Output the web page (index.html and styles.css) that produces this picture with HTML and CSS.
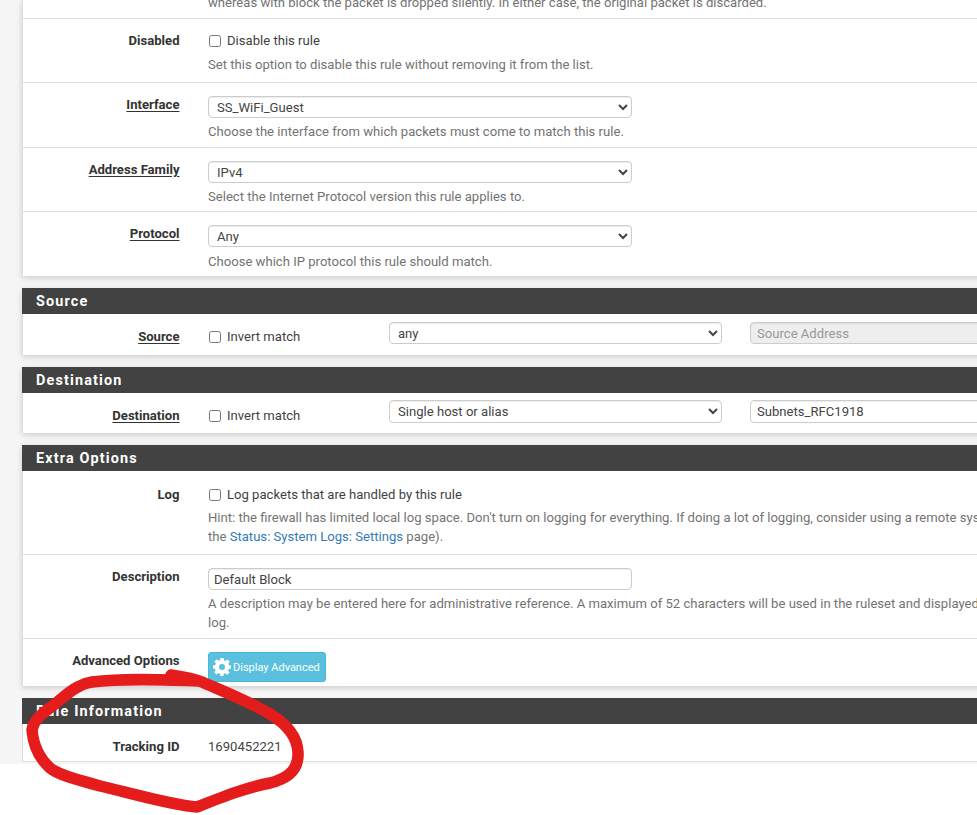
FILE: index.html
```html
<!DOCTYPE html>
<html lang="en">
<head>
<meta charset="utf-8">
<title>Firewall rule</title>
<link rel="stylesheet" href="styles.css">
</head>
<body>
<div class="page">
  <section class="panel first">
    <div class="row clip-row"><div class="label"></div><div class="field"><p class="hint clip-text">whereas with block the packet is dropped silently. In either case, the original packet is discarded.</p></div></div>
    <div class="row r-disabled"><div class="label">Disabled</div><div class="field"><label class="check"><input type="checkbox"> Disable this rule</label><p class="hint">Set this option to disable this rule without removing it from the list.</p></div></div>
    <div class="row r-select tall"><div class="label"><u>Interface</u></div><div class="field"><select class="wide"><option>SS_WiFi_Guest</option></select><p class="hint">Choose the interface from which packets must come to match this rule.</p></div></div>
    <div class="row r-select"><div class="label"><u>Address Family</u></div><div class="field"><select class="wide"><option>IPv4</option></select><p class="hint">Select the Internet Protocol version this rule applies to.</p></div></div>
    <div class="row r-select last"><div class="label"><u>Protocol</u></div><div class="field"><select class="wide"><option>Any</option></select><p class="hint">Choose which IP protocol this rule should match.</p></div></div>
  </section>
  <section class="panel">
    <h2>Source</h2>
    <div class="row r-addr r-src last"><div class="label"><u>Source</u></div><div class="field addr"><label class="check inv"><input type="checkbox"> Invert match</label><select class="mid"><option>any</option></select><input class="text addr-input" type="text" placeholder="Source Address" disabled></div></div>
  </section>
  <section class="panel">
    <h2>Destination</h2>
    <div class="row r-addr r-dest last"><div class="label"><u>Destination</u></div><div class="field addr"><label class="check inv"><input type="checkbox"> Invert match</label><select class="mid"><option>Single host or alias</option></select><input class="text addr-input" type="text" value="Subnets_RFC1918"></div></div>
  </section>
  <section class="panel">
    <h2>Extra Options</h2>
    <div class="row r-log"><div class="label">Log</div><div class="field"><label class="check"><input type="checkbox"> Log packets that are handled by this rule</label><p class="hint tight">Hint: the firewall has limited local log space. Don't turn on logging for everything. If doing a lot of logging, consider using a remote syslog server (see<br>the <a href="#">Status: System Logs: Settings</a> page).</p></div></div>
    <div class="row r-desc"><div class="label">Description</div><div class="field"><input class="text wide" type="text" value="Default Block"><p class="hint">A description may be entered here for administrative reference. A maximum of 52 characters will be used in the ruleset and displayed in the firewall<br>log.</p></div></div>
    <div class="row r-adv last"><div class="label">Advanced Options</div><div class="field"><button class="btn" type="button"><svg viewBox="0 0 24 24" width="18" height="18"><path fill="#fff" fill-rule="evenodd" d="M9.800 0h4.400l.6 3.100 2 .8L19.400 2l3 3-1.900 2.600.8 2L24 10v4l-3.100.6-.8 2 1.900 2.600-3 3-2.600-1.900-2 .8-.6 2.900H9.800l-.6-3.100-2-.8L4.600 22l-3-3 1.900-2.600-.8-2L0 14v-4l3.100-.6.8-2L2 4.800l3-3 2.600 1.900 2-.8zM12 8a4 4 0 1 0 0 8 4 4 0 0 0 0-8z"/></svg>Display Advanced</button></div></div>
  </section>
  <section class="panel tail">
    <h2>Rule Information</h2>
    <div class="row r-track"><div class="label">Tracking ID</div><div class="field track">1690452221</div></div>
  </section>
</div>
<svg class="scribble" viewBox="0 0 977 815" width="977" height="815" aria-hidden="true"><path d="M171 675 C185 677 195 679 202 682 C225 692 250 702 270 714 C285 723 297 735 298 752 C299 768 290 778 270 783 C245 788 225 796 197 807 C175 806 130 793 100 786 C80 780 60 776 50 768 C38 757 33 742 32 730 C34 718 45 712 55 704 C68 693 78 684 92 682 C125 678 165 680 198 681" fill="none" stroke="#e41c1c" stroke-width="11.500" stroke-linecap="round" stroke-linejoin="round"/></svg>
</body>
</html>
```
FILE: styles.css
```css
* { box-sizing: border-box; }
html, body { margin: 0; padding: 0; background: #fff; overflow: hidden; }
body { width: 977px; height: 815px; position: relative; font-family: Roboto, "Liberation Sans", sans-serif; font-size: 13.1px; color: #3a3a3a; }
.page { width: 977px; height: 764px; background: #f5f5f5; padding-left: 22px; overflow: hidden; display: flex; flex-direction: column; gap: 12px; }
.panel { width: 1100px; background: #fff; border-left: 1px solid #ddd; box-shadow: 0 2px 6px rgba(0,0,0,.16); flex: none; }
.panel.tail { box-shadow: none; }
h2 { margin: 0 0 0 -1px; height: 26px; background: #424242; color: #fff; font-size: 14.4px; font-weight: 700; letter-spacing: 1.15px; line-height: 28px; padding-left: 14px; }
.row { display: flex; border-bottom: 1px solid #e0e0e0; }
.row.last { border-bottom: 0; }
.label { width: 156.500px; flex: none; text-align: right; font-weight: 700; color: #333; padding-top: 14px; line-height: 15px; }
.label u { text-underline-offset: 2px; }
.field { margin-left: 28.500px; flex: 1; min-width: 0; padding-top: 14px; white-space: nowrap; }
.hint { margin: 0; color: #737373; line-height: 19px; }
.clip-row { height: 19px; }
.clip-row .field { padding-top: 0; }
.clip-text { margin-top: -7px; }
.r-disabled { height: 64px; }
.r-disabled .hint { margin-top: 7px; }
.r-select { height: 64px; }
.r-select.tall { height: 65px; }
.r-select.last { height: 64px; }
.r-select .label { padding-top: 14px; }
.r-select .hint { margin-top: 4px; }
.r-select.last .hint { margin-top: 5px; }
.check { display: flex; align-items: center; line-height: 15px; color: #3f3f3f; }
.check input { width: 12px; height: 12px; margin: 1px 6px 0 1px; flex: none; }
select, .text { font-family: inherit; font-size: 13.1px; color: #444; background: #fff; border: 1px solid #ccc; border-radius: 4px; height: 22px; box-shadow: inset 0 1px 1px rgba(0,0,0,.075); }
select { padding: 0 4px; display: block; }
.text { padding: 0 5px; display: block; }
.wide { width: 424px; }
.r-select .field { padding-top: 13px; }
.r-addr { height: 41px; }
.r-addr.r-dest { height: 40px; }
.r-addr .label { padding-top: 15px; }
.addr { display: flex; align-items: flex-start; padding-top: 7px; }
.r-src .addr { padding-top: 8px; }
.inv { width: 181px; padding-top: 8px; flex: none; }
.r-src .inv { padding-top: 7px; }
.r-dest .mid, .r-dest .addr-input { height: 23px; }
.mid { width: 333px; }
.addr-input { width: 300px; margin-left: 28px; flex: none; padding: 0 6px; }
.addr-input:disabled { background: #eee; }
.addr-input::placeholder { color: #999; opacity: 1; }
.r-log { height: 84px; }
.r-log .label, .r-log .field { padding-top: 16px; }
.r-log .hint { margin-top: 6px; }
.hint a { color: #337ab7; text-decoration: none; }
.r-desc { height: 84px; }
.r-desc .label { padding-top: 14px; }
.r-desc .field { padding-top: 13px; }
.r-desc .hint { margin-top: 4px; }
.r-adv { height: 47px; }
.r-adv .field { padding-top: 13px; }
.btn { display: flex; align-items: center; gap: 2px; width: 118px; height: 30px; padding: 0 0 0 4px; background: #5bc0de; border: 1px solid #46b8da; border-radius: 3px; color: #fff; font-family: inherit; font-size: 11px; }
.r-track { height: 38px; }
.r-track .label { padding-top: 15px; }
.track { padding-top: 15px; color: #444; }
.scribble { position: absolute; left: 0; top: 0; pointer-events: none; }
```
